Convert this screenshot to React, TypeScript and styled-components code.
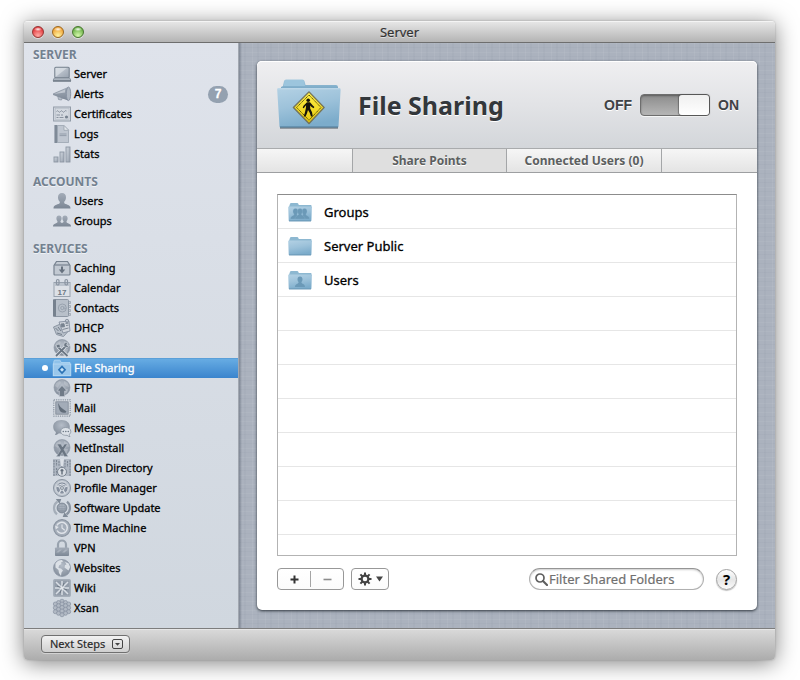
import React, { useState } from 'react';
import styled, { createGlobalStyle, css } from 'styled-components';

const uiFont = `"Lucida Grande", "Noto Sans", "Open Sans", sans-serif`;

const GlobalStyle = createGlobalStyle`
  * { box-sizing: border-box; }
  body {
    margin: 0;
    background: #fff;
    font-family: ${uiFont};
    font-size: 11px;
    color: #000;
  }
  button, input { font: inherit; color: inherit; margin: 0; }
  button { cursor: default; }
  h1, h2, ul { margin: 0; padding: 0; }
  ul { list-style: none; }
`;

const Desktop = styled.div`
  display: flex;
  min-height: 100vh;
  padding: 21px 25px 20px 24px;
`;

const Window = styled.div`
  flex: 1;
  min-width: 0;
  display: flex;
  flex-direction: column;
  border-radius: 4px;
  overflow: hidden;
  box-shadow: 0 0 2px rgba(0, 0, 0, 0.25), 0 3px 22px rgba(0, 0, 0, 0.5);
`;

const TitleBar = styled.header`
  display: grid;
  grid-template-columns: 1fr auto 1fr;
  align-items: center;
  height: 22px;
  padding: 0 8px;
  background: linear-gradient(#e8e8e8, #b4b4b4);
  border-bottom: 1px solid #6e6e6e;
  box-shadow: inset 0 1px #f4f4f4;
`;

const WindowTitle = styled.div`
  font-size: 13px;
  line-height: 20px;
  color: #333;
  text-shadow: 0 1px rgba(255, 255, 255, 0.5);
  -webkit-text-stroke: 0.2px currentColor;
`;

const Lights = styled.div`
  display: flex;
  gap: 8px;
`;

const Light = styled.button<{ $edge: string; $mid: string; $glow: string }>`
  width: 12px;
  height: 12px;
  padding: 0;
  border: 1px solid ${(p) => p.$edge};
  border-radius: 50%;
  background:
    radial-gradient(ellipse 4px 2px at 50% 22%, rgba(255, 255, 255, 0.95), rgba(255, 255, 255, 0) 100%),
    radial-gradient(circle at 50% 85%, ${(p) => p.$glow}, ${(p) => p.$mid} 75%);
  box-shadow: 0 1px rgba(255, 255, 255, 0.5);
`;

const Body = styled.div`
  flex: 1;
  display: flex;
`;

const Sidebar = styled.nav`
  flex: 0 0 215px;
  padding: 3px 0 10px;
  background: linear-gradient(#dfe3eb, #d0d7df);
  border-right: 1px solid #a2a8b1;
`;

const Section = styled.section`
  & + & { margin-top: 9px; }
`;

const SectionTitle = styled.h2`
  height: 18px;
  padding-left: 9px;
  font-size: 12px;
  line-height: 18px;
  font-weight: 700;
  color: #738190;
  text-shadow: 0 1px rgba(255, 255, 255, 0.6);
`;

const Item = styled.button<{ $selected: boolean }>`
  display: flex;
  align-items: center;
  width: 100%;
  height: 20px;
  padding: 0 10px 0 18px;
  border: 0;
  background: none;
  line-height: 20px;
  text-align: left;
  -webkit-text-stroke: 0.3px currentColor;
  ${(p) =>
    p.$selected &&
    css`
      background: linear-gradient(#69aee4, #3a84cd);
      box-shadow: inset 0 1px #5a9fd8;
      color: #fff;
    `}
`;

const Dot = styled.span<{ $on: boolean }>`
  width: 6px;
  height: 6px;
  margin-right: 5px;
  border-radius: 50%;
  background: ${(p) => (p.$on ? '#fff' : 'transparent')};
`;

const ItemIcon = styled.svg`
  width: 18px;
  height: 18px;
  margin-right: 3px;
  overflow: visible;
`;

const Badge = styled.span`
  width: 20px;
  height: 17px;
  margin-left: auto;
  border-radius: 9px;
  background: #94a1b0;
  color: #fff;
  font-family: "Liberation Sans", Arial, sans-serif;
  font-size: 12px;
  font-weight: 700;
  line-height: 17px;
  text-align: center;
`;

const Main = styled.main`
  flex: 1;
  min-width: 0;
  display: flex;
  padding: 18px;
  background:
    linear-gradient(90deg, rgba(50, 60, 75, 0.4), rgba(50, 60, 75, 0) 3px),
    repeating-linear-gradient(90deg, rgba(255, 255, 255, 0.06) 0 1px, transparent 1px 5px, rgba(60, 75, 95, 0.03) 5px 7px, transparent 7px 13px),
    repeating-linear-gradient(rgba(255, 255, 255, 0.05) 0 1px, transparent 1px 4px, rgba(60, 75, 95, 0.03) 4px 5px, transparent 5px 9px),
    #abb2be;
`;

const Card = styled.section`
  flex: 1;
  min-width: 0;
  display: flex;
  flex-direction: column;
  border-radius: 5px;
  background: #fff;
  box-shadow: 0 1px 3px rgba(20, 28, 36, 0.85);
`;

const CardHeader = styled.div`
  display: flex;
  align-items: center;
  height: 87px;
  padding: 0 18px 0 20px;
  border-radius: 5px 5px 0 0;
  background: linear-gradient(#efeff1, #e2e3e6 50%, #d3d6da);
  box-shadow: inset 0 1px #fff;
`;

const BigFolder = styled.svg`
  width: 64px;
  height: 52px;
  margin-right: 17px;
`;

const Heading = styled.h1`
  flex: 1;
  font-size: 25px;
  line-height: 32px;
  font-weight: 700;
  color: #33373b;
  text-shadow: 0 1px #fff;
`;

const Power = styled.label`
  display: flex;
  align-items: center;
  gap: 8px;
  font-family: "Liberation Sans", Arial, sans-serif;
  font-size: 14px;
  font-weight: 700;
  line-height: 16px;
  color: #3f4245;
  text-shadow: 0 1px #fff;
`;

const PowerSwitch = styled.input`
  appearance: none;
  display: flex;
  width: 70px;
  height: 22px;
  margin: 0;
  border: 1px solid #6e6e6e;
  border-radius: 4px;
  background: linear-gradient(#8c8c8c, #b6b6b6);
  box-shadow: inset 0 1px 2px rgba(0, 0, 0, 0.35), 0 1px rgba(255, 255, 255, 0.7);
  &::before {
    content: "";
    width: 30px;
    border-radius: 3px;
    background: linear-gradient(#f0f0f0, #fff);
    box-shadow: 0 0 1px 1px rgba(60, 60, 60, 0.5);
  }
  &:checked { justify-content: flex-end; }
`;

const Tabs = styled.div`
  display: flex;
  justify-content: center;
  height: 25px;
  border-top: 1px solid #a9abad;
  border-bottom: 1px solid #9d9fa1;
  background: linear-gradient(#f6f6f6, #e4e4e4);
`;

const Tab = styled.button<{ $active: boolean }>`
  flex: 0 1 155px;
  padding: 0;
  border: 0 solid #a4a6a8;
  border-width: 0 1px;
  background: ${(p) => (p.$active ? '#dfdfdf' : 'transparent')};
  font-size: 12px;
  line-height: 22px;
  font-weight: 700;
  color: #5c5f60;
  text-shadow: 0 1px #fff;
  white-space: nowrap;
  & + & { border-left: 0; }
`;

const Content = styled.div`
  flex: 1;
  display: flex;
  flex-direction: column;
  padding: 21px 20px 20px;
`;

const FolderList = styled.ul`
  flex: 1;
  min-height: 140px;
  border: 1px solid #b3b3b3;
  border-top-color: #8c8c8c;
  background: repeating-linear-gradient(#fff 0 33px, #e6e6e6 33px 34px);
`;

const FolderRow = styled.li`
  display: flex;
  align-items: center;
  gap: 12px;
  height: 34px;
  padding-left: 10px;
  font-size: 13px;
  line-height: 33px;
  -webkit-text-stroke: 0.3px currentColor;
`;

const SmallFolderSvg = styled.svg`
  width: 24px;
  height: 20px;
`;

const Actions = styled.div`
  display: flex;
  align-items: center;
  margin-top: 12px;
`;

const ButtonGroup = styled.div`
  display: flex;
  align-items: center;
  height: 22px;
  margin-right: 7px;
  border: 1px solid #989898;
  border-radius: 4px;
  background: linear-gradient(#fff, #fbfbfb);
`;

const ToolButton = styled.button<{ $width: number }>`
  display: flex;
  align-items: center;
  justify-content: center;
  gap: 4px;
  width: ${(p) => p.$width}px;
  height: 16px;
  padding: 0;
  border: 0;
  background: none;
  & + & { border-left: 1px solid #a5a5a5; }
`;

const Search = styled.label`
  display: flex;
  align-items: center;
  gap: 1px;
  flex: 0 1 175px;
  min-width: 0;
  height: 22px;
  margin-left: auto;
  padding: 0 5px;
  border: 1px solid #b0b0b0;
  border-top-color: #959595;
  border-radius: 11px;
  background: #fff;
  box-shadow: inset 0 1px 2px rgba(0, 0, 0, 0.2);
`;

const SearchInput = styled.input`
  flex: 1;
  min-width: 0;
  height: 20px;
  padding: 0;
  border: 0;
  outline: 0;
  background: none;
  font-size: 13px;
  &::placeholder {
    color: #707070;
    opacity: 1;
    -webkit-text-stroke: 0.2px currentColor;
  }
`;

const Help = styled.button`
  width: 21px;
  height: 21px;
  margin-left: 12px;
  padding: 0;
  border: 1px solid #a2a2a2;
  border-radius: 50%;
  background: linear-gradient(#fff, #e6e6e6 50%, #fafafa);
  box-shadow: 0 1px 1px rgba(0, 0, 0, 0.25);
  font-size: 15px;
  font-weight: 700;
  line-height: 19px;
`;

const Footer = styled.footer`
  display: flex;
  align-items: center;
  height: 32px;
  padding: 0 17px;
  border-top: 1px solid #7d7d7d;
  background: linear-gradient(#dadada, #acacac);
  box-shadow: inset 0 1px #e6e6e6;
`;

const NextSteps = styled.button`
  display: flex;
  align-items: center;
  gap: 7px;
  height: 18px;
  margin-bottom: 1px;
  padding: 0 6px 0 8px;
  border: 1px solid #707070;
  border-radius: 4px;
  background: linear-gradient(#f2f2f2, #cfcfcf);
  box-shadow: 0 1px rgba(255, 255, 255, 0.4);
  line-height: 16px;
  color: #2b2b2b;
  -webkit-text-stroke: 0.2px currentColor;
`;

const HiddenDefs = styled.svg`
  position: absolute;
`;

const Defs = () => (
  <HiddenDefs width="0" height="0" aria-hidden="true">
    <defs>
      <linearGradient id="g" x1="0" y1="0" x2="0" y2="1">
        <stop offset="0" stopColor="#a3acb8" />
        <stop offset="1" stopColor="#7c8795" />
      </linearGradient>
      <linearGradient id="lite" x1="0" y1="0" x2="1" y2="1">
        <stop offset="0" stopColor="#d0d6de" />
        <stop offset="1" stopColor="#98a2af" />
      </linearGradient>
      <radialGradient id="ball" cx="0.5" cy="0.35" r="0.65">
        <stop offset="0" stopColor="#b5bdc8" />
        <stop offset="1" stopColor="#858f9c" />
      </radialGradient>
      <linearGradient id="fFront" x1="0" y1="0" x2="0.3" y2="1">
        <stop offset="0" stopColor="#b3d1e4" />
        <stop offset="0.5" stopColor="#9dc2da" />
        <stop offset="1" stopColor="#7caccb" />
      </linearGradient>
      <linearGradient id="fBack" x1="0" y1="0" x2="0" y2="1">
        <stop offset="0" stopColor="#a3c8de" />
        <stop offset="1" stopColor="#6a9dbd" />
      </linearGradient>
      <linearGradient id="sign" x1="0" y1="0" x2="0" y2="1">
        <stop offset="0" stopColor="#fff04a" />
        <stop offset="1" stopColor="#e8c90c" />
      </linearGradient>
    </defs>
  </HiddenDefs>
);

const dark = '#77828f';
const pale = '#dfe4ea';
const globe = (
  <>
    <circle cx="9" cy="8.5" r="8" fill="url(#ball)" stroke="#8a94a1" strokeWidth="0.6" />
    <path d="M3 4l4-2 1 2-2 2-1 3-3-2zM11 2l4 2 1 4-3-1-2-2zM11 10l4 0-1 4-3 1z" fill="#ccd2da" opacity="0.4" />
  </>
);

const art: Record<string, React.ReactNode> = {
  Server: (
    <>
      <rect x="1.8" y="2.3" width="14.4" height="10.4" rx="1" fill="url(#lite)" stroke={dark} strokeWidth="1.1" />
      <path d="M2.5 12L14 3H2.5z" fill="#e3e7ed" opacity="0.6" />
      <path d="M1.3 13h15.4l1.2 2.3H.1z" fill="#b5bdc7" stroke={dark} strokeWidth="0.7" />
      <path d="M0 16h18" stroke="#6d7783" strokeWidth="1.3" />
    </>
  ),
  Alerts: (
    <>
      <path d="M4.5 10l1 4.500 3 .5.7-2 1.800.4V11z" fill="#b5bdc8" stroke="#8b95a2" strokeWidth="0.8" />
      <path d="M0 8.600L15 2v13.500L0 10z" fill="url(#g)" />
      <path d="M1 9l11-4.500v3z" fill="#c0c7d0" />
      <ellipse cx="15.500" cy="8.800" rx="2.200" ry="6.800" fill="#aeb7c2" stroke="#8690a0" strokeWidth="0.9" />
    </>
  ),
  Certificates: (
    <>
      <rect x=".6" y="2" width="16.9" height="14" fill="#d4d9e0" stroke="#929ca8" />
      <rect x="2.5" y="3.5" width="13.5" height="11" fill="none" stroke="#b5bdc7" strokeWidth="0.6" />
      <path d="M3.500 6.500q1-1.500 2 0t2 0 2 0 2 0 2-.5M3.500 10h3.500m1 0h2M3.500 12.500h2m1 0h4" fill="none" stroke={dark} strokeWidth="0.8" />
      <circle cx="13.5" cy="12" r="1.6" fill={dark} />
    </>
  ),
  Logs: (
    <>
      <path d="M1.500 0h9.500l5 5V18H1.500z" fill="#bfc6d0" />
      <path d="M1.500 0h3v18h-3z" fill="#7f8a97" />
      <path d="M11 .5v4.800h4.800z" fill="#e2e6eb" stroke="#929ca8" strokeWidth="0.7" />
      <path d="M4.500 .5H11M15.500 5.500v12h-11" fill="none" stroke="#a5aeb9" />
      <path d="M6.500 9h7M6.500 10.600h7" stroke="#8f99a6" strokeWidth="0.9" />
    </>
  ),
  Stats: (
    <g fill="url(#lite)" stroke="#8c96a3" strokeWidth="0.9">
      <rect x="1" y="12" width="4" height="5" />
      <rect x="7" y="7" width="4" height="10" />
      <rect x="13" y="2" width="4" height="15" />
    </g>
  ),
  Users: (
    <path d="M9 1c2.600 0 4 1.700 4 4.200 0 2-.8 3.500-1.800 4.500-.2 1.300.3 1.900 1.500 2.400 2.500.9 4.800 1.500 4.800 4.400H.5c0-2.900 2.300-3.500 4.800-4.400 1.200-.5 1.700-1.100 1.500-2.400C5.800 8.700 5 7.200 5 5.200 5 2.700 6.400 1 9 1z" fill="url(#g)" />
  ),
  Groups: (
    <path d="M6 3.500c1.700 0 2.600 1.200 2.600 2.800 0 1.500-.6 2.400-1.200 3 0 1.200 1 1.500 1.600 1.800.6-.3 1.600-.6 1.600-1.800-.6-.6-1.200-1.500-1.200-3 0-1.600.9-2.800 2.600-2.800s2.600 1.200 2.600 2.800c0 1.500-.5 2.400-1.100 3 0 1.500.6 1.700 2 2.200 1.500.5 2.500 1.200 2.500 3H0c0-1.800 1-2.500 2.500-3 1.400-.5 2-.7 2-2.200-.6-.6-1.100-1.500-1.100-3C3.400 4.700 4.300 3.500 6 3.500z" fill="url(#g)" />
  ),
  Caching: (
    <>
      <path d="M3.500 2.500h11l2.500 4v8.500q0 1-1 1H2q-1 0-1-1V6.500z" fill="#c2c9d2" stroke={dark} strokeWidth="1.2" />
      <path d="M1.5 6h15" stroke={dark} strokeWidth="1.2" />
      <path d="M9 7.500v4" stroke="#66717e" strokeWidth="2" />
      <path d="M5.800 10.500h6.400L9 14.500z" fill="#66717e" />
    </>
  ),
  Calendar: (
    <>
      <rect x="1" y="3.5" width="16" height="14" fill="#dde1e7" stroke="#98a2ae" />
      <path d="M1.500 4h15v3h-15z" fill="#bbc3cd" />
      <g fill="none" stroke="#8b95a2" strokeWidth="1.2">
        <rect x="3.5" y=".5" width="2.5" height="5.5" rx="1.2" />
        <rect x="12" y=".5" width="2.5" height="5.5" rx="1.2" />
      </g>
      <text x="9" y="15.500" textAnchor="middle" fontFamily="Liberation Sans" fontWeight="700" fontSize="8" stroke="none" fill="#6c7784">17</text>
    </>
  ),
  Contacts: (
    <>
      <rect x=".5" y=".5" width="15" height="17" rx="1" fill="#b8c0ca" stroke="#8d97a4" />
      <path d="M0 .5h3v17H0z" fill="#76818e" />
      <path d="M16 2.500h1.500v2H16zM16 6.500h1.500v2H16zM16 10.500h1.500v2H16zM16 14.500h1.500v2H16z" fill="#dde1e7" stroke="#929ca8" strokeWidth="0.7" />
      <circle cx="9.3" cy="9" r="4" fill="none" stroke="#98a2ae" />
      <circle cx="9.3" cy="9" r="1.6" fill="none" stroke="#98a2ae" />
      <path d="M11 7.500v2.200q1 1 2-.7" fill="none" stroke="#98a2ae" strokeWidth="0.8" />
    </>
  ),
  DHCP: (
    <>
      <path d="M.5 8l7-3 7 8-4 4.500-7-2z" fill="#b8c0ca" stroke="#8b95a2" />
      <path d="M6 3l10-1 1 10-7 2z" fill="#d0d5dc" stroke="#8791a0" strokeWidth="0.9" />
      <path d="M8 5l3-.3.5 3-3 .4zM12.500 4.500l3-.3M13 6.500l2.500-.3M9.500 10.500l6-1.500" fill={dark} stroke={dark} strokeWidth="0.9" />
      <path d="M2.500 9l3 3M5 8l3 4M4 14l5 1.500" stroke="#727d8a" />
      <circle cx="14" cy="2" r="1.7" fill="none" stroke="#8b95a2" />
    </>
  ),
  DNS: (
    <>
      {globe}
      <path d="M3 17L13 7M4.500 7.500L14.500 17" stroke={pale} strokeWidth="3.2" />
      <path d="M3 17L12.500 7.500M5 8l9.500 9" stroke="#6a7582" strokeWidth="1.8" />
      <path d="M11 4.500q-1 4 3.500 4l2-2-2.200.4-.7-1.300L15 4q-2.500-1-4 .5zM3 6l3.500-1 1 3L4 9z" fill="#6a7582" stroke={pale} strokeWidth="0.5" />
    </>
  ),
  'File Sharing': (
    <>
      <path d="M.5 5L1 2q.1-.8 1-.8h4.500q.8 0 1 .8L8 3.500h9V16.500H.5z" fill="#8fc2ea" stroke="#b5d8f3" strokeWidth="0.8" />
      <rect x=".2" y="5" width="17.6" height="11.8" fill="#9ac7eb" stroke="#bcdcf4" strokeWidth="0.8" />
      <path d="M9 6.300L13.200 10.800 9 15.300 4.800 10.800z" fill="#2c73b5" />
      <path d="M9 8.800L11 10.800 9 12.800 7 10.800z" fill="#c9e4f8" />
    </>
  ),
  FTP: (
    <>
      {globe}
      <path d="M9 6.500l5.200 5.500h-2.500v5.500H6.300V12H3.800z" fill="#6f7a87" stroke="#c5ccd5" strokeWidth="0.7" />
    </>
  ),
  Mail: (
    <>
      <rect x=".8" y=".8" width="16.4" height="16.4" fill="#dde1e7" stroke="#8d97a4" strokeWidth="1.2" strokeDasharray="1.3 0.9" />
      <rect x="2.8" y="2.800" width="12.4" height="12.4" fill="#a3acb8" stroke="#7d8794" strokeWidth="0.8" />
      <path d="M5 4c1.300 1.300 1.700 4 4 5.200l4.500 3.300-1 1.300c-2.500-.2-4.300.2-5.500-1.800-1.200-2-1.600-5.500-2-8z" fill="#626d7a" />
    </>
  ),
  Messages: (
    <>
      <path d="M8.500 1c5 0 8.300 2.800 8.300 6.700s-3.300 6.800-8.300 6.800c-1 0-1.800-.1-2.600-.3-1 1-2.500 1.800-4 1.800.8-1 1-1.800.9-3C1 11.700.2 9.900.2 7.700.2 3.800 3.500 1 8.500 1z" fill="url(#ball)" />
      <path d="M12.700 8.500c3 0 5.100 1.600 5.100 3.900 0 1.400-.6 2.400-1.600 3 0 .9.300 1.600.8 2.200-1.200 0-2.200-.5-2.900-1.300-3.600.4-6.400-1.300-6.400-3.900 0-2.300 2-3.900 5-3.900z" fill="#dde2e8" stroke="#8d97a4" strokeWidth="0.9" />
      <g fill="#6f7a87">
        <circle cx="10.3" cy="12.5" r=".8" />
        <circle cx="12.8" cy="12.5" r=".8" />
        <circle cx="15.3" cy="12.5" r=".8" />
      </g>
    </>
  ),
  NetInstall: (
    <>
      {globe}
      <path d="M4 5h4l1.500 3 2-3h3l-3.500 5.500L15 17.500h-3.800L9.200 13.500l-2.500 4H3.500l4-6.500z" fill="#6a7582" stroke="#b9c1cb" strokeWidth="0.6" />
    </>
  ),
  'Open Directory': (
    <>
      <rect x="0" y="0" width="18" height="17" fill="#b1b9c4" />
      <path d="M1 1v16M3.500 1v6m0 2v7M6 2v5M12 1v8M14.500 2v6M17 1v16M8.500 0v8" stroke="#7d8794" strokeWidth="1.1" strokeDasharray="2 0.8" />
      <path d="M7 0h4l-1 7H8z" fill="#dce1e7" />
      <circle cx="9" cy="12.8" r="4.500" fill="#d8dde3" stroke="#77828f" />
      <path d="M9 10v5.500M7.500 11.500h3" stroke="#626d7a" strokeWidth="1.4" />
    </>
  ),
  'Profile Manager': (
    <>
      <circle cx="9" cy="9" r="8.5" fill="#bcc4ce" stroke="#8993a0" />
      <circle cx="9" cy="9" r="6.2" fill="#8791a0" stroke="#e0e4e9" strokeWidth="1" />
      <path d="M9 9L3.500 7M9 9l5.500-2M9 9l-3 5.500M9 9l3 5.500" stroke="#dce1e7" strokeWidth="1.3" />
      <path d="M4.500 6.500Q9 3.500 13.500 6.500" fill="none" stroke="#dce1e7" />
      <circle cx="9" cy="9" r="2.3" fill="#6c7784" stroke="#dce1e7" />
      <circle cx="9" cy="9" r=".9" fill="#dce1e7" />
    </>
  ),
  'Software Update': (
    <>
      <circle cx="9" cy="9" r="4.900" fill="url(#ball)" stroke="#7f8a97" />
      <path d="M6 7.500h6M5 9.500h8M6.500 11.500h5M9 4.500v9" stroke="#8b95a2" strokeWidth="0.5" />
      <path d="M4 15.300A8 8 0 0 1 4.500 2.500" fill="none" stroke="#a5aeb9" strokeWidth="2.2" />
      <path d="M14 2.700A8 8 0 0 1 13.500 15.500" fill="none" stroke="#8b95a2" strokeWidth="2.2" />
      <path d="M2.800 0h5.500L6.500 4.800zM15.200 18H9.700l1.800-4.800z" fill="#7f8a97" />
    </>
  ),
  'Time Machine': (
    <>
      <circle cx="9" cy="9" r="8.3" fill="#a4adb9" stroke="#8993a0" strokeWidth="1.2" />
      <path d="M4 11.500a5.500 5.500 0 1 0-.2-5" fill="none" stroke="#dfe3e9" strokeWidth="1.5" />
      <path d="M2 6.500l.8 4 3-2.500z" fill="#dfe3e9" />
      <path d="M9 5.500V9l2.800 2.200" fill="none" stroke="#dfe3e9" strokeWidth="1.2" />
    </>
  ),
  VPN: (
    <>
      <path d="M5 9V5.500a4 4 0 0 1 8 0V9" fill="none" stroke="#98a2ae" strokeWidth="2.200" />
      <rect x="2" y="8.5" width="14" height="8.5" rx=".8" fill="url(#g)" />
      <path d="M3 13.500l3.500-3h2.500l-3.500 3zM9 13.500l3.500-3H15l-3.500 3z" fill="#bac2cc" opacity="0.6" />
    </>
  ),
  Websites: (
    <>
      <circle cx="9" cy="9" r="8.5" fill="url(#ball)" stroke="#8791a0" strokeWidth="0.7" />
      <path d="M2.500 4.500C4 2 6.500.9 9 1l1 1.500-2 1 .5 1.500-2.500 1.500L5.500 9l2.500.5 2 2-1.500 2-.5 3.500-2-3-.5-3L2.500 8.500zM12 3l3.500 1.200L17.200 8l-1.700 3.500-2-1.500-2-1.500.5-2.500 1.500-.5z" fill="#dbe0e6" />
    </>
  ),
  Wiki: (
    <>
      <rect x=".8" y=".8" width="16.400" height="16.400" rx="1" fill="#929ca9" stroke="#a5aeb9" strokeWidth="1.5" />
      <path d="M9 9L3 3M9 9l6-6M9 9L3 15M9 9l6 6M9 9V2M9 9h7M9 9H2M9 9v7" stroke="#d9dee5" strokeWidth="1.5" />
      <path d="M9 9l2-5M9 9l5 2M9 9l-5-2M9 9l-2 5" stroke="#6c7784" strokeWidth="1" />
      <circle cx="9" cy="9" r="1.7" fill="#e2e6eb" />
    </>
  ),
  Xsan: (
    <g fill="#b1b9c4" stroke="#8791a0" strokeWidth="0.7">
      {[[9, 2.2], [5.500, 3.500], [12.500, 3.500], [2.300, 5], [9, 5], [15.700, 5], [5.500, 6.700], [12.500, 6.700], [2.300, 8.800], [9, 8.500], [15.700, 8.800], [5.500, 10.300], [12.500, 10.300], [2.300, 12.700], [9, 12], [15.700, 12.700], [5.500, 14.300], [12.500, 14.300], [9, 15.800]].map(([x, y]) => (
        <circle key={`${x}-${y}`} cx={x} cy={y} r="2" />
      ))}
    </g>
  ),
};

const sections = [
  { title: 'SERVER', items: ['Server', 'Alerts', 'Certificates', 'Logs', 'Stats'] },
  { title: 'ACCOUNTS', items: ['Users', 'Groups'] },
  {
    title: 'SERVICES',
    items: [
      'Caching', 'Calendar', 'Contacts', 'DHCP', 'DNS', 'File Sharing', 'FTP', 'Mail', 'Messages',
      'NetInstall', 'Open Directory', 'Profile Manager', 'Software Update', 'Time Machine', 'VPN',
      'Websites', 'Wiki', 'Xsan',
    ],
  },
];

const SharingFolder = () => (
  <BigFolder viewBox="0 0 64 52" aria-hidden="true">
    <path d="M3 47h58v2.500H3z" fill="#4f5962" />
    <path d="M4 12V8l2-1 1-5q.4-1.500 2-1.500h16.500q1.600 0 2 1.500L28.500 6H59q1.800 0 2 2v5H4z" fill="url(#fBack)" />
    <path d="M6.500 7l1-4.500q.3-1 1.500-1h16.500q1.200 0 1.500 1L28 7z" fill="#9cc5dd" />
    <path d="M1.500 9H62q1.800 0 1.600 2L61.500 47.500q0 1-1 1h-57q-1 0-1-1L.2 11q-.2-2 1.300-2z" fill="url(#fFront)" />
    <path d="M1 9.800h61.500" stroke="#c5deec" strokeWidth="0.9" />
    <path d="M3 47.500h58" stroke="#5f8ca9" strokeWidth="0.8" />
    <path d="M32 13L47 28.500 32 44.500 16.500 28.500z" fill="#54512a" stroke="#75755b" strokeWidth="1.6" strokeLinejoin="round" />
    <path d="M32 13.800L46.200 28.500 32 43.500 17.400 28.500z" fill="url(#sign)" />
    <path d="M32 16L44 28.500 32 41.200 19.600 28.500z" fill="none" stroke="#4b4208" strokeWidth="0.9" strokeDasharray="1.500 0.500" />
    <circle cx="31.200" cy="21.2" r="1.8" fill="#16140a" />
    <path d="M30 23.300h3l2.800 3.200 1.600 1.500-.8 1.200-2-1.200-1.400-1.400v3l1.800 3.700.8 4.300H34l-1.300-3.900-1.700-2.700-1 3.200-1.400 3.400h-1.900l1.300-4.300.9-4.300.2-2.800-1.500 1.700-.7 1.400-1.200-.6.8-2z" fill="#16140a" />
  </BigFolder>
);

const figure = 'M0 -5.500c1.700 0 2.500 1.200 2.500 2.800 0 1.400-.5 2.200-1.100 2.900 0 1.900 3.600 1.200 3.600 4.800h-10c0-3.600 3.600-2.900 3.600-4.800-.6-.7-1.100-1.500-1.100-2.900 0-1.600.8-2.800 2.500-2.800z';

const SmallFolder = ({ kind }: { kind: string }) => (
  <SmallFolderSvg viewBox="0 0 24 20" aria-hidden="true">
    <path d="M1 5l1-3.200Q2.300 1 3.200 1h6q.8 0 1.100.8L10.800 3h12q.7 0 .7.800V6H1z" fill="#8db8d1" />
    <path d="M.8 4.500h22.500q.6 0 .6.600L23.400 18.500q0 .7-.7.700H1.400q-.7 0-.7-.7L.200 5.100q0-.6.600-.6z" fill="url(#fFront)" />
    <path d="M1 18.900h22" stroke="#6794b0" strokeWidth="0.8" />
    {kind === 'Users' && <path d={figure} transform="translate(12 12)" fill="#6b99b7" />}
    {kind === 'Groups' && (
      <g fill="#6b99b7" stroke="#8bb5cf" strokeWidth="0.3">
        <path d={figure} transform="translate(7.500 12)" />
        <path d={figure} transform="translate(16.500 12)" />
        <path d={figure} transform="translate(12 12)" />
      </g>
    )}
  </SmallFolderSvg>
);

const gearTeeth = [0, 45, 90, 135, 180, 225, 270, 315];

export default function App() {
  const [current, setCurrent] = useState('File Sharing');
  const [tab, setTab] = useState('Share Points');
  return (
    <>
      <GlobalStyle />
      <Defs />
      <Desktop>
        <Window>
          <TitleBar>
            <Lights>
              <Light aria-label="Close" $edge="#963432" $mid="#e2373b" $glow="#ffaaa5" />
              <Light aria-label="Minimize" $edge="#9c681f" $mid="#f0a133" $glow="#fff3a0" />
              <Light aria-label="Zoom" $edge="#47762f" $mid="#69b045" $glow="#d5f8ac" />
            </Lights>
            <WindowTitle>Server</WindowTitle>
          </TitleBar>
          <Body>
            <Sidebar>
              {sections.map((s) => (
                <Section key={s.title}>
                  <SectionTitle>{s.title}</SectionTitle>
                  <ul>
                    {s.items.map((name) => (
                      <li key={name}>
                        <Item
                          $selected={current === name}
                          aria-current={current === name ? 'page' : undefined}
                          onClick={() => setCurrent(name)}
                        >
                          <Dot $on={name === 'File Sharing'} />
                          <ItemIcon viewBox="0 0 18 18" aria-hidden="true">{art[name]}</ItemIcon>
                          {name}
                          {name === 'Alerts' && <Badge>7</Badge>}
                        </Item>
                      </li>
                    ))}
                  </ul>
                </Section>
              ))}
            </Sidebar>
            <Main>
              <Card>
                <CardHeader>
                  <SharingFolder />
                  <Heading>File Sharing</Heading>
                  <Power>
                    OFF
                    <PowerSwitch type="checkbox" role="switch" defaultChecked />
                    ON
                  </Power>
                </CardHeader>
                <Tabs role="tablist">
                  {['Share Points', 'Connected Users (0)'].map((t) => (
                    <Tab key={t} role="tab" aria-selected={tab === t} $active={tab === t} onClick={() => setTab(t)}>
                      {t}
                    </Tab>
                  ))}
                </Tabs>
                <Content>
                  <FolderList>
                    {['Groups', 'Server Public', 'Users'].map((f) => (
                      <FolderRow key={f}>
                        <SmallFolder kind={f} />
                        {f}
                      </FolderRow>
                    ))}
                  </FolderList>
                  <Actions>
                    <ButtonGroup>
                      <ToolButton $width={32} aria-label="Add">
                        <svg width="9" height="9" viewBox="0 0 9 9"><path d="M4.500 .5v8M.5 4.500h8" stroke="#333" strokeWidth="2" /></svg>
                      </ToolButton>
                      <ToolButton $width={33} aria-label="Remove">
                        <svg width="9" height="9" viewBox="0 0 9 9"><path d="M.5 4.500h8" stroke="#8c8c8c" strokeWidth="1.6" /></svg>
                      </ToolButton>
                    </ButtonGroup>
                    <ButtonGroup>
                      <ToolButton $width={36} aria-label="Actions">
                        <svg width="14" height="14" viewBox="-7 -7 14 14">
                          {gearTeeth.map((a) => (
                            <rect key={a} x="-1" y="-6.500" width="2" height="3" fill="#444" transform={`rotate(${a})`} />
                          ))}
                          <circle r="3.400" fill="none" stroke="#444" strokeWidth="2.2" />
                        </svg>
                        <svg width="7" height="6" viewBox="0 0 7 6"><path d="M0 .5h7L3.500 5.500z" fill="#444" /></svg>
                      </ToolButton>
                    </ButtonGroup>
                    <Search>
                      <svg width="13" height="13" viewBox="0 0 13 13" aria-hidden="true">
                        <circle cx="5" cy="5" r="4" fill="none" stroke="#5e5e5e" strokeWidth="1.7" />
                        <path d="M8 8l4 4" stroke="#5e5e5e" strokeWidth="2.2" strokeLinecap="round" />
                      </svg>
                      <SearchInput type="text" aria-label="Filter Shared Folders" placeholder="Filter Shared Folders" />
                    </Search>
                    <Help aria-label="Help">?</Help>
                  </Actions>
                </Content>
              </Card>
            </Main>
          </Body>
          <Footer>
            <NextSteps>
              Next Steps
              <svg width="11" height="10" viewBox="0 0 11 10" aria-hidden="true">
                <rect x=".5" y=".5" width="10" height="9" rx="1.5" fill="none" stroke="#444" />
                <path d="M3 4h5L5.500 6.700z" fill="#444" />
              </svg>
            </NextSteps>
          </Footer>
        </Window>
      </Desktop>
    </>
  );
}
